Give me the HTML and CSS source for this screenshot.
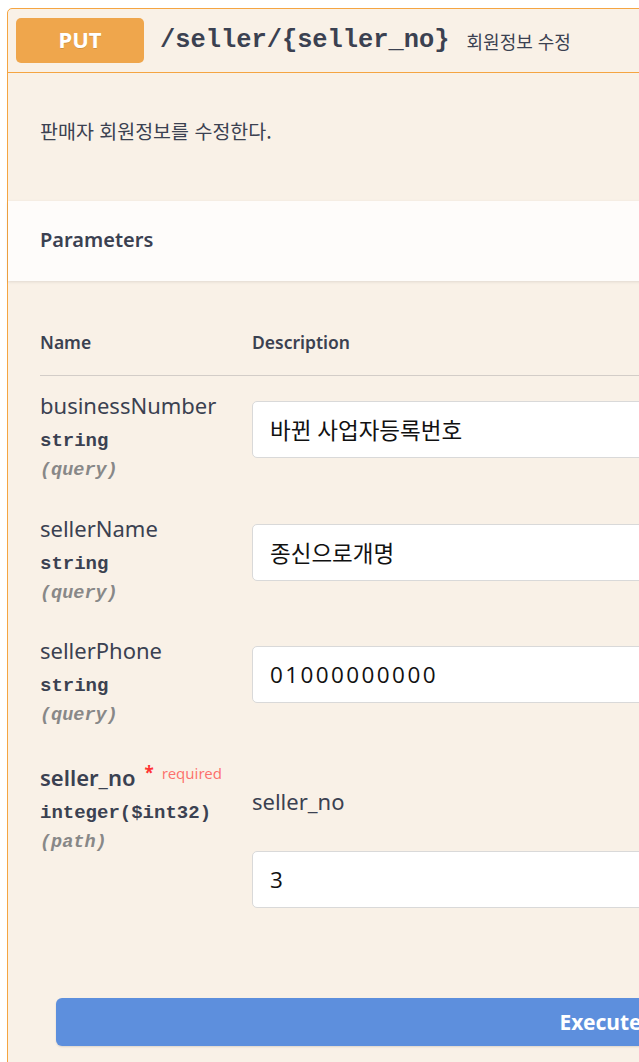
FILE: index.html
```html
<!DOCTYPE html>
<html lang="ko">
<head>
<meta charset="utf-8">
<title>PUT /seller/{seller_no}</title>
<link rel="stylesheet" href="styles.css">
</head>
<body>
<div class="page">
  <div class="opblock">
    <div class="summary">
      <span class="method">PUT</span>
      <span class="path">/seller/{seller_no}</span>
      <span class="summary-desc">회원정보 수정</span>
    </div>
    <div class="op-desc">판매자 회원정보를 수정한다.</div>
    <div class="section-header"><h4>Parameters</h4></div>
    <div class="params">
      <div class="row head">
        <div class="col-name">Name</div>
        <div class="col-desc">Description</div>
      </div>
      <div class="row param">
        <div class="col-name">
          <div class="pname">businessNumber</div>
          <div class="ptype">string</div>
          <div class="pin">(query)</div>
        </div>
        <div class="col-desc">
          <div class="input">바뀐 사업자등록번호</div>
        </div>
      </div>
      <div class="row param">
        <div class="col-name">
          <div class="pname">sellerName</div>
          <div class="ptype">string</div>
          <div class="pin">(query)</div>
        </div>
        <div class="col-desc">
          <div class="input">종신으로개명</div>
        </div>
      </div>
      <div class="row param">
        <div class="col-name">
          <div class="pname">sellerPhone</div>
          <div class="ptype">string</div>
          <div class="pin">(query)</div>
        </div>
        <div class="col-desc">
          <div class="input num">01000000000</div>
        </div>
      </div>
      <div class="row param last">
        <div class="col-name">
          <div class="pname required">seller_no<span class="star">*</span><span class="req">required</span></div>
          <div class="ptype">integer($int32)</div>
          <div class="pin">(path)</div>
        </div>
        <div class="col-desc">
          <div class="plabel">seller_no</div>
          <div class="input">3</div>
        </div>
      </div>
    </div>
    <div class="execute-wrapper">
      <button class="execute">Execute</button>
    </div>
  </div>
</div>
</body>
</html>
```

FILE: styles.css
```css
html, body {
  margin: 0;
  padding: 0;
  background: #ffffff;
  overflow: hidden;
}

body {
  font-family: "Noto Sans", "Noto Sans CJK KR", sans-serif;
  color: #3b4151;
}

.page {
  padding: 8px 0 0 7px;
  width: 1200px;
}

.opblock {
  width: 1185px;
  border: 1px solid #f5a542;
  border-radius: 5px;
  background: #f9f1e7;
}

.summary {
  display: flex;
  align-items: center;
  padding: 9px 8px;
  border-bottom: 1px solid #f5a542;
}

.method {
  width: 128px;
  height: 45px;
  padding-bottom: 4px;
  box-sizing: border-box;
  border-radius: 5px;
  background: #efa64c;
  color: #ffffff;
  font-weight: 700;
  font-size: 22px;
  display: flex;
  align-items: center;
  justify-content: center;
  text-shadow: 0 1px 0 rgba(0, 0, 0, 0.12);
}

.path {
  margin-left: 16px;
  font-family: "Liberation Mono", monospace;
  font-weight: 700;
  font-size: 25.4px;
  color: #3b4151;
}

.summary-desc {
  margin-left: 17px;
  font-family: "Noto Sans CJK KR", sans-serif;
  font-size: 18px;
  color: #3b4151;
}

.op-desc {
  padding: 45px 32px 57px;
  line-height: 26px;
  font-family: "Noto Sans CJK KR", sans-serif;
  font-size: 19.5px;
}

.section-header {
  height: 80px;
  padding: 0 32px;
  display: flex;
  align-items: center;
  background: rgba(255, 255, 255, 0.8);
  box-shadow: 0 1px 3px rgba(0, 0, 0, 0.1);
}

.section-header h4 {
  margin: 0 0 4px;
  font-size: 20px;
  font-weight: 600;
}

.params {
  padding: 0 0 0 40px;
  margin-left: -8px;
}

.row {
  display: flex;
}

.col-name {
  width: 212px;
  flex: none;
}

.col-desc {
  flex: 1;
}

.row.head {
  padding: 49px 0 21px;
  line-height: 24px;
  font-size: 17.5px;
  font-weight: 600;
  border-bottom: 1px solid rgba(59, 65, 81, 0.2);
}

.row.param .col-name {
  padding: 16px 0 12.5px;
}

.pname {
  font-size: 22px;
  line-height: 26px;
}

.pname.required {
  font-weight: 600;
  margin-bottom: 2px;
}

.star {
  color: #f33;
  font-size: 17px;
  font-weight: 700;
  margin-left: 9px;
  vertical-align: 7px;
}

.req {
  color: rgba(255, 0, 0, 0.55);
  font-size: 15px;
  font-weight: 400;
  margin-left: 8px;
  vertical-align: 7px;
}

.ptype {
  margin-top: 8px;
  font-family: "Liberation Mono", monospace;
  font-weight: 700;
  font-size: 19px;
  line-height: 30px;
}

.pin {
  font-family: "Liberation Mono", monospace;
  font-weight: 700;
  font-style: italic;
  font-size: 18.5px;
  line-height: 30px;
  color: #888888;
}

.input {
  margin-top: 25px;
  width: 537px;
  height: 57px;
  box-sizing: border-box;
  padding: 0 17px;
  display: flex;
  align-items: center;
  background: #ffffff;
  border: 1px solid #d9d9d9;
  border-radius: 5px;
  font-family: "Open Sans", "Noto Sans CJK KR", sans-serif;
  font-size: 22.5px;
  color: #111111;
}

.input.num {
  letter-spacing: 2.4px;
}

.plabel {
  margin-top: 44px;
  font-size: 22px;
  line-height: 26px;
}

.row.last .plabel + .input {
  margin-top: 37px;
}

.row.last .col-desc {
  padding-bottom: 16px;
}

.execute-wrapper {
  padding: 74px 48px 32px;
}

.execute {
  display: block;
  width: 100%;
  height: 48px;
  border: none;
  border-radius: 6px;
  background: #5d8fdd;
  color: #ffffff;
  font-family: "Noto Sans", sans-serif;
  font-weight: 700;
  font-size: 21px;
  box-shadow: 0 1px 2px rgba(0, 0, 0, 0.12);
}
```
